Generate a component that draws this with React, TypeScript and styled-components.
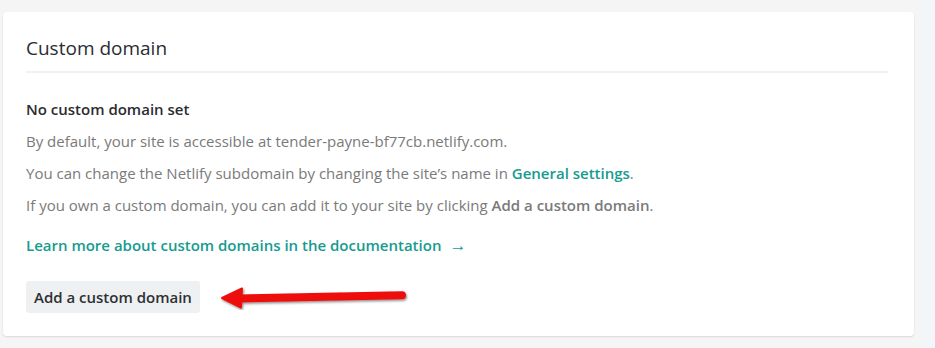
import React from 'react'
import styled, { createGlobalStyle } from 'styled-components'

const GlobalStyle = createGlobalStyle`
  html, body {
    margin: 0;
    padding: 0;
    background: #f5f5f5;
  }
  body {
    font-family: "Open Sans", "Noto Sans", sans-serif;
    -webkit-font-smoothing: antialiased;
  }
`

const ArrowMark = () => (
    <svg width="190" height="26" viewBox="0 0 190 26">
        <defs>
            <filter id="arrowShadow" x="-5%" y="-40%" width="110%" height="180%">
                <feDropShadow dx="1" dy="1.5" stdDeviation="1" floodColor="#000" floodOpacity="0.45"/>
            </filter>
        </defs>
        <g filter="url(#arrowShadow)">
            <path d="M20 14.5 L182 11.2" stroke="#ee0c0c" strokeWidth="8" strokeLinecap="round"/>
            <path d="M2 14 L22 4.5 L21 23.5 Z" fill="#ee0c0c" strokeLinejoin="round" stroke="#ee0c0c" strokeWidth="2"/>
        </g>
    </svg>
)

const App = () => {
    return (
        <>
            <GlobalStyle/>
            <Page>
                <Card>
                    <Header>
                        <Title>Custom domain</Title>
                    </Header>
                    <Body>
                        <Subtitle>No custom domain set</Subtitle>
                        <Text>By default, your site is accessible at tender-payne-bf77cb.netlify.com.</Text>
                        <Text>
                            You can change the Netlify subdomain by changing the site’s name in{' '}
                            <Link>General settings</Link>.
                        </Text>
                        <Text>
                            If you own a custom domain, you can add it to your site by clicking{' '}
                            <Strong>Add a custom domain</Strong>.
                        </Text>
                        <DocLink>
                            Learn more about custom domains in the documentation
                            <LinkArrow>→</LinkArrow>
                        </DocLink>
                        <Actions>
                            <Button>Add a custom domain</Button>
                            <ArrowMark/>
                        </Actions>
                    </Body>
                </Card>
                <Side/>
            </Page>
        </>
    )
}

const Page = styled.div`
  display: flex;
  height: 348px;
  padding-top: 12px;
  box-sizing: border-box;
`

const Card = styled.div`
  margin-left: 3px;
  width: 911px;
  height: 324px;
  box-sizing: border-box;
  background: #ffffff;
  border-radius: 4px;
  box-shadow: 0 1px 2px rgba(0, 0, 0, 0.12);
  padding: 0 26px 0 23px;
`

const Side = styled.div`
  flex: 1;
  margin-top: -12px;
  margin-left: 7px;
  background: #f4f5f8;
`

const Header = styled.div`
  height: 59px;
  display: flex;
  align-items: flex-end;
  border-bottom: 2px solid #f1f2f3;
`

const Title = styled.h2`
  margin: 0 0 10px 0;
  font-size: 19px;
  font-weight: 400;
  color: #2a2d32;
  line-height: 26px;
`

const Body = styled.div`
  padding-top: 24px;
  display: flex;
  flex-direction: column;
  align-items: flex-start;
`

const Subtitle = styled.div`
  font-size: 15px;
  font-weight: 600;
  color: #2a2c30;
  line-height: 24px;
  margin-bottom: 8px;
`

const Text = styled.div`
  font-size: 15px;
  color: #7a7a7a;
  line-height: 24px;
  margin-bottom: 8px;
`

const Link = styled.span`
  color: #169b8f;
  font-weight: 600;
`

const Strong = styled.span`
  font-weight: 600;
  color: #7a7a7a;
`

const DocLink = styled.div`
  font-size: 15px;
  font-weight: 600;
  color: #169b8f;
  line-height: 24px;
  margin-top: 8px;
`

const LinkArrow = styled.span`
  margin-left: 8px;
  font-size: 17px;
  font-weight: 400;
`

const Actions = styled.div`
  display: flex;
  align-items: center;
  gap: 20px;
  margin-top: 24px;
`

const Button = styled.div`
  background: #eef0f1;
  color: #2d3035;
  font-size: 15px;
  font-weight: 600;
  line-height: 32px;
  padding: 0 8px;
  border-radius: 3px;
`

export default App
